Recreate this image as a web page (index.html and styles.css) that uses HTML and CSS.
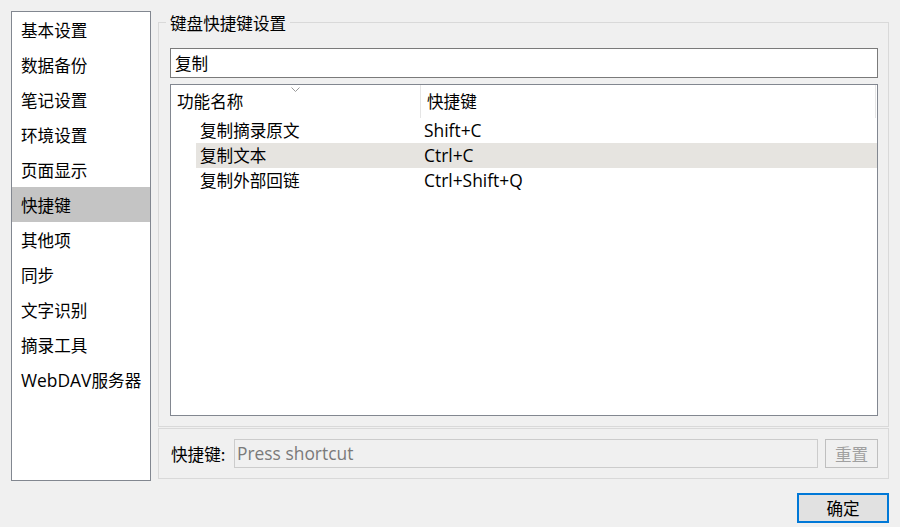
FILE: index.html
```html
<!DOCTYPE html>
<html lang="zh-CN">
<head>
<meta charset="utf-8">
<title>设置</title>
<link rel="stylesheet" href="styles.css">
</head>
<body>
<div class="main">
  <ul class="sidebar">
    <li class="nav-item">基本设置</li>
    <li class="nav-item">数据备份</li>
    <li class="nav-item">笔记设置</li>
    <li class="nav-item">环境设置</li>
    <li class="nav-item">页面显示</li>
    <li class="nav-item active">快捷键</li>
    <li class="nav-item">其他项</li>
    <li class="nav-item">同步</li>
    <li class="nav-item">文字识别</li>
    <li class="nav-item">摘录工具</li>
    <li class="nav-item"><span class="lat">WebDAV</span>服务器</li>
  </ul>
  <div class="right">
    <fieldset class="group">
      <legend class="group-title">键盘快捷键设置</legend>
      <div class="search">复制</div>
      <div class="table">
        <div class="thead">
          <div class="th col-name">功能名称
            <svg class="sort" width="9" height="5" viewBox="0 0 9 5"><path d="M0.5 0.5 L4.5 4.5 L8.5 0.5" fill="none" stroke="#9a9a9a" stroke-width="1"/></svg>
          </div>
          <div class="th col-key">快捷键</div>
          <div class="th col-rest"></div>
        </div>
        <div class="row">
          <div class="cell-wrap"><div class="cell-name">复制摘录原文</div><div class="cell-key lat">Shift+C</div></div>
        </div>
        <div class="row selected">
          <div class="cell-wrap"><div class="cell-name">复制文本</div><div class="cell-key lat">Ctrl+C</div></div>
        </div>
        <div class="row">
          <div class="cell-wrap"><div class="cell-name">复制外部回链</div><div class="cell-key lat">Ctrl+Shift+Q</div></div>
        </div>
      </div>
    </fieldset>
    <div class="group bottom-box">
      <span class="label">快捷键:</span>
      <div class="shortcut-input lat">Press shortcut</div>
      <button class="btn-reset" disabled>重置</button>
    </div>
  </div>
</div>
<div class="footer">
  <button class="btn-ok">确定</button>
</div>
</body>
</html>
```
FILE: styles.css
```css
* { box-sizing: border-box; }
html, body { margin: 0; }
body {
  width: 900px;
  height: 527px;
  background: #f0f0f0;
  padding: 11px 11px 0 11px;
  font-family: "Noto Sans CJK SC", sans-serif;
  font-size: 16.6px;
  color: #000;
  overflow: hidden;
}
.lat {
  font-family: "Open Sans", "Noto Sans CJK SC", sans-serif;
  font-size: 17.4px;
}
.main {
  display: flex;
  gap: 7px;
  height: 470px;
}
.sidebar {
  list-style: none;
  margin: 0;
  padding: 0;
  width: 140px;
  height: 470px;
  background: #fff;
  border: 1px solid #828790;
}
.nav-item {
  height: 35px;
  line-height: 36px;
  padding-left: 9px;
  white-space: nowrap;
}
.nav-item.active { background: #c4c4c4; }
.right {
  width: 731px;
  display: flex;
  flex-direction: column;
}
.group {
  margin: 0;
  border: 1px solid #d9d9d9;
}
fieldset.group {
  min-width: 0;
  padding: 15px 10px 10px 11px;
}
.group-title {
  margin-left: -4px;
  padding: 0 4px;
  line-height: 24px;
  height: 22px;
}
.search {
  height: 30px;
  background: #fff;
  border: 1px solid #7a7a7a;
  line-height: 28px;
  padding-left: 4px;
}
.table {
  margin-top: 6px;
  height: 332px;
  background: #fff;
  border: 1px solid #828790;
}
.thead {
  display: flex;
  height: 33px;
}
.th {
  position: relative;
  line-height: 33px;
  padding-left: 6px;
}
.col-name {
  width: 250px;
  border-right: 1px solid #e5e5e5;
}
.col-key { width: 455px; border-right: 1px solid #e5e5e5; }
.col-rest { flex: 1; padding: 0; }
.sort {
  position: absolute;
  left: 120px;
  top: 2px;
}
.row {
  height: 25px;
  padding-left: 25px;
}
.cell-wrap {
  display: flex;
  height: 25px;
  line-height: 25px;
}
.row.selected .cell-wrap { background: #e6e4e0; }
.cell-name { width: 225px; padding-left: 4px; }
.cell-key { padding-left: 3px; }
.bottom-box {
  margin-top: 1px;
  height: 51px;
  display: flex;
  align-items: center;
  padding: 0 10px 0 12px;
}
.label { width: 63px; flex: none; }
.shortcut-input {
  width: 584px;
  height: 29px;
  background: #f0f0f0;
  border: 1px solid #cccccc;
  color: #7a7a7a;
  line-height: 27px;
  padding-left: 2px;
}
.btn-reset {
  margin-left: 7px;
  width: 53px;
  height: 29px;
  background: #f0f0f0;
  border: 1px solid #bfbfbf;
  color: #a0a0a0;
  font: inherit;
  padding: 0;
}
.footer {
  display: flex;
  justify-content: flex-end;
  margin-top: 12px;
}
.btn-ok {
  width: 92px;
  height: 30px;
  background: #e1e1e1;
  border: 2px solid #0078d7;
  font: inherit;
  color: #000;
  padding: 0;
}
```
